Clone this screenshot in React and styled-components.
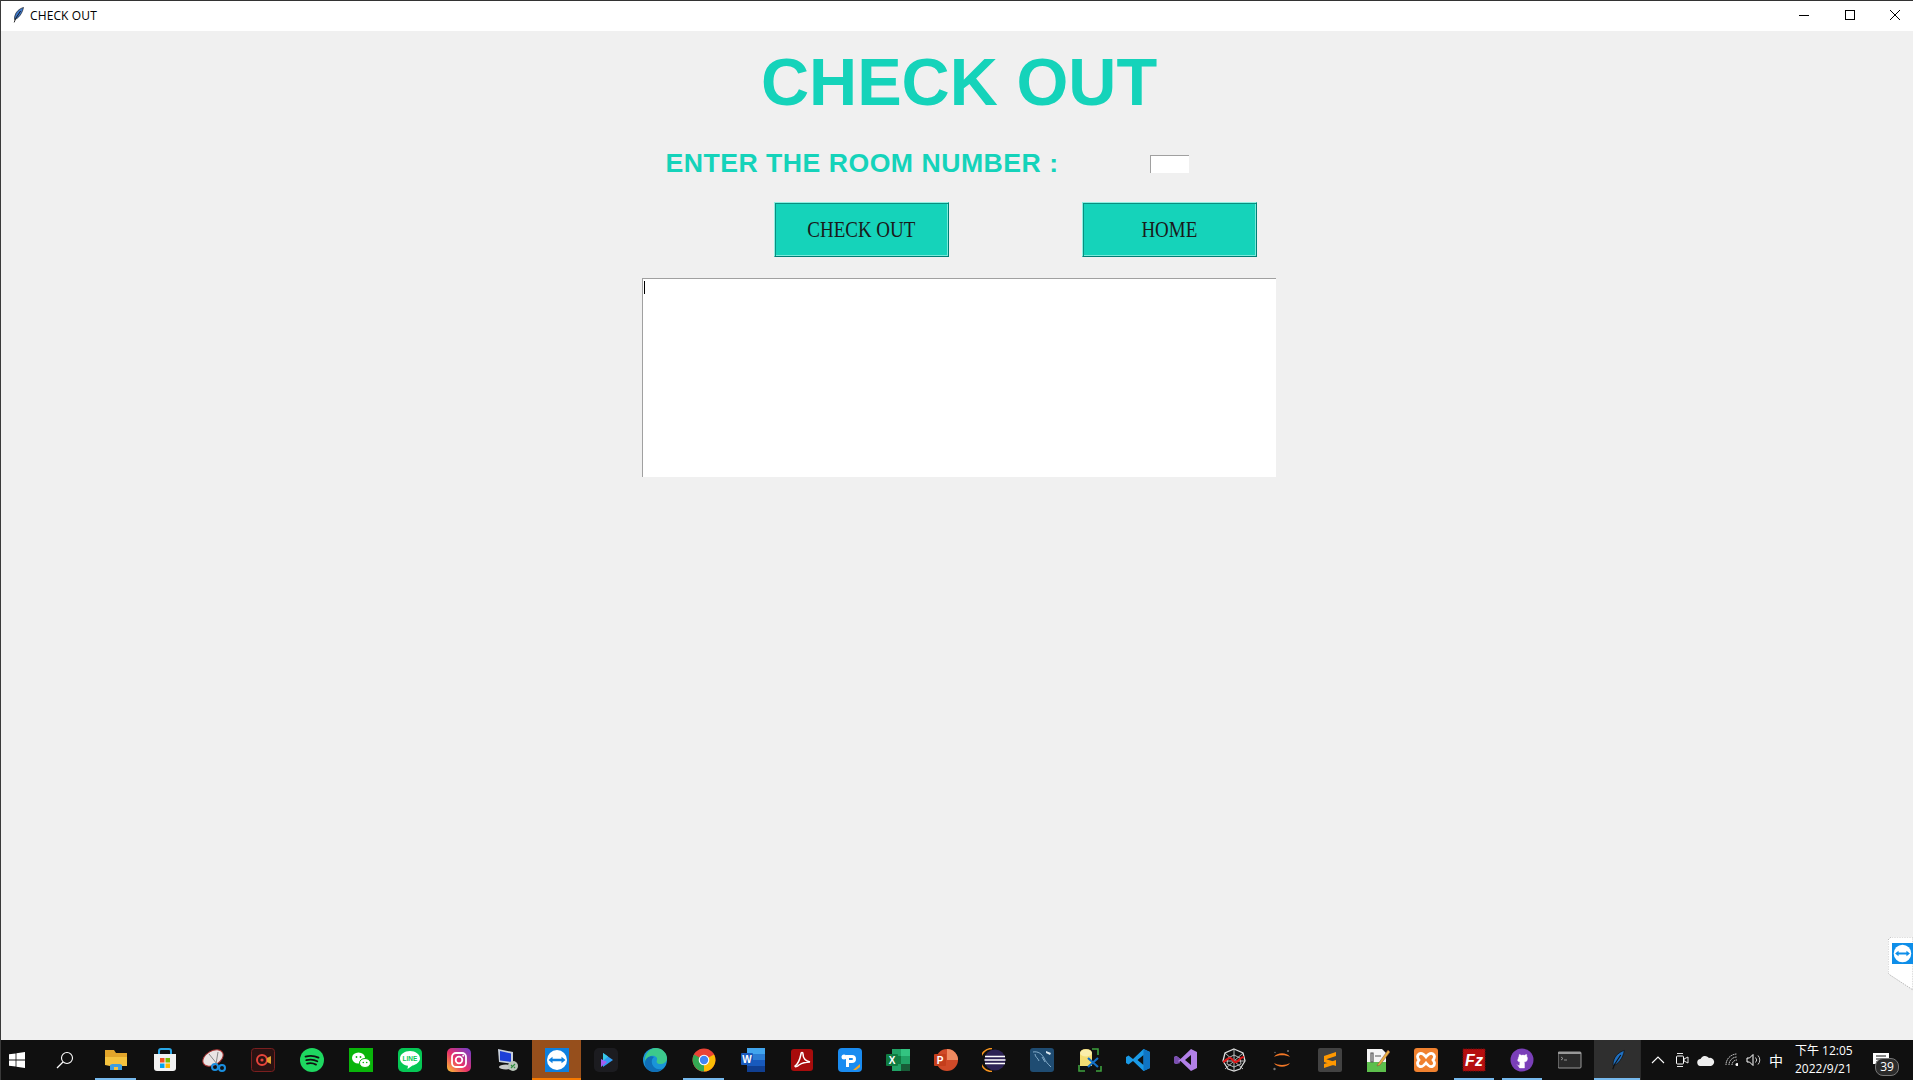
import React from "react";
import styled, { createGlobalStyle } from "styled-components";

const Global = createGlobalStyle`
  html, body { margin: 0; padding: 0; height: 100%; overflow: hidden; background: #f0f0f0; }
  #root { height: 100%; }
`;
const TEAL = "#15d3ba";

const Screen = styled.div`
  width: 1913px; height: 1080px; display: flex; flex-direction: column; position: relative;
  background: #f0f0f0; border-left: 1px solid #3a3a3a; box-sizing: border-box; overflow: hidden;
`;
const TitleBar = styled.header`
  height: 31px; flex: none; display: flex; align-items: center; background: #fff; margin-right: -5px;
  border-top: 1px solid #333; box-sizing: border-box; padding: 0 0 2px 11px;
`;
const TitleText = styled.span`
  font: 12px "Open Sans", "Noto Sans", sans-serif; color: #000; margin-left: 6px; flex: 1; letter-spacing: 0.12px;
`;
const WinBtn = styled.div`
  width: 45.5px; height: 28px; display: flex; align-items: center; justify-content: center;
`;
const Content = styled.main`
  flex: 1; min-height: 0; padding: 7px 0 0 641px;
`;
const Form = styled.div`
  display: grid; grid-template-columns: 440px 174px 20px; justify-items: center; align-items: center;
`;
const Heading = styled.h1`
  grid-column: 1 / -1; margin: 0; height: 87px; font: bold 66.67px/88px "Liberation Sans", Arial, sans-serif;
  color: ${TEAL}; white-space: nowrap;
`;
const Label = styled.label`
  font: bold 26.67px/30px "Liberation Sans", Arial, sans-serif; color: ${TEAL}; white-space: nowrap;
  margin-top: 23px; letter-spacing: 0.48px;
`;
const RoomInput = styled.input`
  width: 39px; height: 18px; box-sizing: border-box; margin: 25px 0 0; padding: 0; background: #fff; outline: none;
  border: 0; border-top: 1px solid #a0a0a0; border-left: 1px solid #a0a0a0;
`;
const ActionButton = styled.button`
  width: 175px; height: 55px; box-sizing: border-box; margin: 24px ${p => (p.$nudge ? 2 : 0)}px 0 0; padding: 0; background: ${TEAL}; color: #000;
  border: 1px solid; border-color: #8ef0e2 #007f75 #007f75 #8ef0e2;
  box-shadow: inset 1px 1px 0 #0a8f80, inset -1px -1px 0 #7aeadb;
  display: flex; align-items: center; justify-content: center; overflow: hidden;
`;
const ButtonText = styled.span`
  font: 24px/1 "Liberation Serif", "Times New Roman", serif; display: inline-block; white-space: nowrap;
  transform: scaleX(0.79); color: #1a1a1a; position: relative; top: -1px;
`;
const Output = styled.div`
  grid-column: 1 / -1; justify-self: stretch; height: 199px; margin-top: 21px; background: #fff; box-sizing: border-box;
  border-top: 1px solid #a0a0a0; border-left: 1px solid #a0a0a0; padding: 2px 0 0 1px;
`;
const Caret = styled.div`
  width: 1px; height: 13px; background: #000;
`;
const Taskbar = styled.footer`
  height: 40px; flex: none; margin-left: -1px; display: flex; align-items: center; background: #101010; position: relative;
`;
const Fixed = styled.div`
  width: ${p => p.$w}px; padding-left: ${p => p.$pl || 0}px; box-sizing: border-box; height: 40px; flex: none; display: flex; align-items: center;
  justify-content: ${p => (p.$pl ? "flex-start" : "center")};
`;
const Task = styled.div`
  width: ${p => p.$w}px; height: 40px; flex: none; display: flex; align-items: center; justify-content: center; position: relative;
  background: ${p => p.$flash ? "#964f1c" : p.$active ? "#2f2f2f" : "transparent"};
  &::after {
    content: ""; display: ${p => p.$run || p.$flash ? "block" : "none"}; position: absolute; bottom: 0; height: 2px;
    left: ${p => p.$flash || p.$active ? 0 : 4}px; right: ${p => p.$flash || p.$active ? 0 : 4}px;
    background: ${p => p.$flash ? "#f77a00" : "#76b9ed"};
  }
`;
const Tray = styled.div`
  flex: 1; display: flex; align-items: center; height: 40px; position: relative; padding-left: 5px;
  border-left: 1px solid #2a2a2a;
`;
const TrayIcon = styled.div`
  width: 24px; height: 40px; flex: none; display: flex; align-items: center; justify-content: center;
`;
const Lang = styled.div`
  width: 20px; flex: none; text-align: center; color: #fff; font: 14px "Noto Sans CJK TC", sans-serif;
`;
const Clock = styled.div`
  width: 64px; margin-left: 9px; flex: none; color: #fff; font: 12px/18px "Open Sans", "Noto Sans CJK TC", sans-serif; text-align: left;
`;
const Notify = styled.div`
  width: 40px; margin-left: 2px; height: 40px; position: relative; display: flex; align-items: center; justify-content: center;
`;
const Badge = styled.span`
  position: absolute; left: 14px; top: 18px; width: 22px; height: 16px; border-radius: 8px; background: #2b2b2b; border: 1px solid #777;
  color: #fff; font: 12px/16px "Open Sans", sans-serif; text-align: center;
`;
const SideTab = styled.div`
  position: absolute; right: 0; top: 937px; width: 25px; height: 54px;
`;

const S = ({ children, s = 24, vb = "0 0 24 24" }) => <svg width={s} height={s} viewBox={vb}>{children}</svg>;

const Feather = ({ s = 12, h = 16, c = "#3f78c8" }) => (
  <svg width={s} height={h} viewBox="0 0 12 16">
    <path d="M11.500.4C7.600 1.400 3.800 4.600 2.800 9c-.4 1.600-.4 2.800-.2 3.600C6.400 11.400 10.400 6.600 11.500.4z" fill={c} stroke="#111" strokeWidth=".6" />
    <path d="M8.600 4 3.600 11.600 2.200 15.400" stroke="#111" strokeWidth=".9" fill="none" />
  </svg>
);
const TV = ({ s = 24 }) => (
  <S s={s}>
    <rect width="24" height="24" fill="#0e80df" />
    <circle cx="12" cy="12" r="10" fill="#fff" />
    <path d="M3.500 12 7.500 8.800v2h9v-2l4 3.200-4 3.200v-2h-9v2z" fill="#0e80df" />
  </S>
);

const icons = [
  <S key="a"><path d="M1 8h22v10H6l-5-1z" fill="#f5c33f" /><path d="M1 2h9l2 3h11v4H1z" fill="#e2a52b" /><path d="M8 16h8l2 1v5H6v-5z" fill="#3c9ee0" /><path d="M10 19h4v3h-4z" fill="#f5c33f" /></S>,
  <S key="b"><path d="M1 6h22v14q0 3-3 3H4q-3 0-3-3z" fill="#f2f2f2" /><path d="M6 6V3q0-2 2-2h8q2 0 2 2v3" stroke="#29a8e8" strokeWidth="2" fill="none" /><rect x="7" y="10" width="4.500" height="4.500" fill="#f25022" /><rect x="12.500" y="10" width="4.500" height="4.500" fill="#7fba00" /><rect x="7" y="15.500" width="4.500" height="4.500" fill="#00a4ef" /><rect x="12.500" y="15.500" width="4.500" height="4.500" fill="#ffb900" /></S>,
  <S key="c"><ellipse cx="11" cy="10" rx="11" ry="7" transform="rotate(-30 11 10)" fill="#e9e4e4" stroke="#a33" strokeWidth="1" /><path d="M7 6l8 10M16 4l-2 12" stroke="#888" strokeWidth="1" /><circle cx="13" cy="19" r="3" fill="none" stroke="#1a8fe0" strokeWidth="2" /><circle cx="20" cy="20" r="3" fill="none" stroke="#1a8fe0" strokeWidth="2" /></S>,
  <S key="d"><rect x=".5" y=".5" width="23" height="23" rx="3" fill="#2a1212" stroke="#7a1f1f" /><circle cx="11" cy="12" r="5" fill="none" stroke="#e8453c" strokeWidth="2" /><circle cx="11" cy="12" r="1.600" fill="#e8453c" /><path d="M16 10l4-2v8l-4-2z" fill="#e0a030" /></S>,
  <S key="e"><circle cx="12" cy="12" r="12" fill="#1ed760" /><path d="M5.500 8.600c4.500-1.200 9-.9 13 1M6.300 12.200c3.800-1 7.700-.7 11 1.100M7 15.600c3.200-.8 6.300-.5 9 1" stroke="#101010" strokeWidth="1.800" strokeLinecap="round" fill="none" /></S>,
  <S key="f"><rect width="24" height="24" fill="#09b50a" /><ellipse cx="9.500" cy="10" rx="6.500" ry="5.500" fill="#fff" /><ellipse cx="16" cy="15" rx="5.500" ry="4.500" fill="#fff" stroke="#09b50a" /><circle cx="7.500" cy="9" r=".9" fill="#09b50a" /><circle cx="11.500" cy="9" r=".9" fill="#09b50a" /><circle cx="14.300" cy="14.500" r=".8" fill="#09b50a" /><circle cx="17.700" cy="14.500" r=".8" fill="#09b50a" /></S>,
  <S key="g"><rect width="24" height="24" rx="5" fill="#06c755" /><path d="M12 3c-5.500 0-10 3.300-10 7.500 0 3.700 3.400 6.700 8 7.300l-.5 3.200 5-3.400c3.500-1 7.500-3.400 7.500-7.100C22 6.300 17.500 3 12 3z" fill="#fff" /><text x="12" y="13" textAnchor="middle" fill="#06c755" fontFamily="Liberation Sans" fontWeight="bold" fontSize="6.500">LINE</text></S>,
  <S key="h"><defs><linearGradient id="ig" x1="0" y1="1" x2="1" y2="0"><stop offset="0" stopColor="#fdc830" /><stop offset=".45" stopColor="#e8306a" /><stop offset="1" stopColor="#6a40d0" /></linearGradient></defs><rect width="24" height="24" rx="5" fill="url(#ig)" /><rect x="5" y="5" width="14" height="14" rx="4" fill="none" stroke="#fff" strokeWidth="1.800" /><circle cx="12" cy="12" r="3.300" fill="none" stroke="#fff" strokeWidth="1.800" /><circle cx="16.200" cy="7.800" r="1" fill="#fff" /></S>,
  <S key="i"><path d="M2 1l15 3v12L3 14z" fill="#c8d0dc" /><path d="M4 3l11 2.500V14L4 12.500z" fill="#1d3fd8" /><ellipse cx="10" cy="19" rx="7" ry="2.500" fill="#c9c9c9" /><circle cx="17" cy="18" r="5" fill="#b9c4b9" /><path d="M15 20l4-4M15 17l1 1M18 19l1 1" stroke="#2f8f3f" strokeWidth="1.200" /></S>,
  <TV key="j" />,
  <S key="k"><rect width="24" height="24" rx="5" fill="#1c1c20" /><path d="M9 5l10 7-10 7z" fill="#2f9cf4" /><path d="M7 11l6 3-6 5z" fill="#a45cf2" /><path d="M9 5l5 3.500L9 13z" fill="#38c8e8" /></S>,
  <S key="l"><circle cx="12" cy="12" r="12" fill="#1a94d8" /><path d="M2 14C1 7 6 0 13 0c6 0 11 5 11 10 0 4-3 6-7 6-3 0-4-2-3-4 1-3-3-5-6-4-3 1-5 3-6 6z" fill="#3cc98c" /><path d="M2 14C3 9 8 7 11 9 8 11 8 16 11 19c3 3 8 3 10 0-3 4-7 5-9 5C6 24 1 20 2 14z" fill="#0f6fb8" /></S>,
  <S key="m"><circle cx="12" cy="12" r="11.500" fill="#ea4335" /><path d="M12 12 22 6.500A11.500 11.500 0 0 1 12 23.500z" fill="#fbbc05" /><path d="M12 12 12 23.500A11.500 11.500 0 0 1 2 6.500z" fill="#34a853" /><circle cx="12" cy="12" r="5.300" fill="#fff" /><circle cx="12" cy="12" r="4.200" fill="#4285f4" /></S>,
  <S key="n"><rect x="6" y="0" width="18" height="24" fill="#2b7cd3" /><rect x="6" y="0" width="18" height="6" fill="#41a5ee" /><rect x="6" y="12" width="18" height="6" fill="#185abd" /><rect x="6" y="18" width="18" height="6" fill="#103f91" /><rect y="5" width="12" height="12" rx="1" fill="#185abd" /><text x="6" y="15" textAnchor="middle" fill="#fff" fontFamily="Liberation Sans" fontWeight="bold" fontSize="10">W</text></S>,
  <S key="o"><rect x="1" y="1" width="22" height="22" rx="3" fill="#a80c0c" /><path d="M5 18c3-2 5-7 6-12 0-2 2-2 2 0 0 4 3 7 7 8-3 0-8 1-11 3-2 2-4 2-4 1z" fill="none" stroke="#fff" strokeWidth="1.500" /></S>,
  <S key="p"><rect width="24" height="24" rx="4" fill="#1a8cf0" /><path d="M8 7h6a4 4 0 0 1 0 8h-3v4H8zM11 10v2h3a1 1 0 0 0 0-2z" fill="#fff" /><circle cx="6" cy="9" r="2.500" fill="#fff" /><path d="M15 22l7-6v3l-4 3z" fill="#f5a623" /></S>,
  <S key="q"><rect x="6" y="1" width="18" height="22" fill="#21a366" /><rect x="15" y="1" width="9" height="7" fill="#33c481" /><rect x="6" y="8" width="9" height="8" fill="#107c41" /><rect x="15" y="16" width="9" height="7" fill="#185c37" /><rect y="6" width="12" height="12" rx="1" fill="#107c41" /><text x="6" y="16" textAnchor="middle" fill="#fff" fontFamily="Liberation Sans" fontWeight="bold" fontSize="10">X</text></S>,
  <S key="r"><circle cx="13" cy="12" r="11" fill="#d04a28" /><path d="M13 1a11 11 0 0 1 11 11H13z" fill="#f08a60" /><rect y="6" width="12" height="12" rx="1" fill="#c43e1c" /><text x="6" y="16" textAnchor="middle" fill="#fff" fontFamily="Liberation Sans" fontWeight="bold" fontSize="10">P</text></S>,
  <S key="s"><path d="M10 .5a11.500 11.500 0 0 0 0 23" fill="none" stroke="#f7941e" strokeWidth="1.500" /><circle cx="13" cy="12" r="10.500" fill="#2c2255" /><path d="M3 8.500h20M2.500 12h21M3 15.500h20" stroke="#fff" strokeWidth="1.300" /></S>,
  <S key="t"><rect width="24" height="24" rx="3" fill="#1f4c72" /><path d="M3 4c5-1 9 2 11 6 1 3 4 6 7 9M5 6c0 3 3 4 4 7M12 9l3 5" stroke="#9cc3de" strokeWidth=".8" fill="none" /><path d="M16 3l5 2-1 2-4-2z" fill="#dce8f0" /></S>,
  <S key="u"><path d="M2 6q0-5 6-5t6 5v12H2z" fill="#f5dd72" /><ellipse cx="8" cy="5" rx="6" ry="3.500" fill="#fbeeaa" /><path d="M14 1h6v6M1 17v6h6M23 18v5h-5" stroke="#3ea13e" strokeWidth="1.600" fill="none" /><path d="M10 19l10-9M20 19L10 10" stroke="#1470c8" strokeWidth="2.200" /></S>,
  <S key="v"><path d="M17.500 1 24 4v16l-6.500 3L7 13l-4.500 3.500L0 15v-6l2.500-1.500L7 11z" fill="#1a9ae6" /><path d="M17.500 7 11.500 12l6 5z" fill="#101010" /><path d="M17.500 1 24 4v16l-6.500 3z" fill="#0f75c4" /></S>,
  <S key="w"><path d="M17 1l6 3v16l-6 3L6.500 13l-4 3L0 15V9l2.500-1 4 3z" fill="#b280e8" /><path d="M17 7l-6 5 6 5z" fill="#101010" /><path d="M0 9l2.500-1 4 3-2.500 2 2.500 2-4 1L0 15z" fill="#7a4fb0" /></S>,
  <S key="x"><path d="M12 1 21 5l2 8-5 8-6 2-6-2-5-8 2-8z" fill="none" stroke="#ddd" strokeWidth="1.300" /><path d="M12 1v22M1 13h22M3 5l18 16M21 5 3 21M12 7l6 3 1 6-7 3-7-3 1-6z" stroke="#ccc" strokeWidth=".9" fill="none" /><path d="M1 14c3-1 4-4 7-4s3 5 6 4 4-5 8-5" stroke="#e01818" strokeWidth="2.200" fill="none" /></S>,
  <S key="y"><path d="M4 9c3-5 13-5 16 0-4-2.500-12-2.500-16 0zM4 15c3 5 13 5 16 0-4 2.500-12 2.500-16 0z" fill="#f37726" /><circle cx="18" cy="3" r="1" fill="#777" /><circle cx="4.500" cy="21" r="1.200" fill="#777" /><circle cx="5" cy="4.500" r=".7" fill="#777" /></S>,
  <S key="z"><rect width="24" height="24" rx="2" fill="#424242" /><path d="M6 8 18 4v4L6 12zM6 10.500l12 3.800v-.1L18 18 6 14zM6 16l12-4v4L6 20z" fill="#ff9800" /></S>,
  <S key="aa"><path d="M1 1h15l4 4v19H1z" fill="#f5f5f5" /><path d="M1 14h19v10H1z" fill="#5cbf4c" /><path d="M5 5h2v9H5zM9 8h6" stroke="#555" strokeWidth="1.200" fill="none" /><path d="M12 16 22 2l2 2-10 13-3 1z" fill="#e8b040" stroke="#844" strokeWidth=".5" /></S>,
  <S key="ab"><rect width="24" height="24" rx="3" fill="#f0812f" /><path d="M5 6q3-2 7 3 4-5 7-3t0 6q3 4 0 6t-7-3q-4 5-7 3t0-6q-3-4 0-6z" fill="none" stroke="#fff" strokeWidth="2.800" /></S>,
  <S key="ac"><rect x="1" y="1" width="22" height="22" fill="#b50f0f" strokeDasharray="1.500 1" stroke="#7a0a0a" /><text x="12" y="18" textAnchor="middle" fill="#fff" fontFamily="Liberation Sans" fontStyle="italic" fontWeight="bold" fontSize="16">Fz</text></S>,
  <S key="ad"><circle cx="12" cy="12" r="11.500" fill="#7a3fb8" /><path d="M9.500 20v-2.500c-2 .4-2.500-1-2.500-1M14.500 20v-4c0-1 0-1.500-.5-2 2 0 3.500-1 3.500-3.500 0-1-.3-1.700-.8-2.300.2-.7 0-1.700 0-1.700s-1 0-2 .8a7 7 0 0 0-3.500 0c-1-.8-2-.8-2-.8s-.2 1-.1 1.700c-.5.600-.8 1.300-.8 2.300C6.800 13 8.200 14 10.200 14c-.4.400-.5 1-.5 1.500V20h4.800z" fill="#fff" stroke="#fff" strokeWidth=".4" /></S>,
  <S key="ae"><rect x="0" y="4" width="23" height="16" rx="1" fill="#2a2a2a" stroke="#999" /><path d="M0 4h23v2H0z" fill="#999" /><path d="M3 9l2 1.500L3 12M6 12h3" stroke="#aaa" strokeWidth=".8" fill="none" /></S>,
];

const tasks = icons.map((icon, i) => {
  const w = i < 15 ? 49 : 48;
  return { icon, w, run: [0, 12, 28, 29].includes(i), flash: i === 9 };
});

export default function App() {
  return (
    <Screen>
      <Global />
      <TitleBar>
        <Feather />
        <TitleText>CHECK OUT</TitleText>
        <WinBtn><svg width="10" height="10"><path d="M0 5.500h10" stroke="#000" /></svg></WinBtn>
        <WinBtn><svg width="10" height="10"><rect x=".5" y=".5" width="9" height="9" fill="none" stroke="#000" /></svg></WinBtn>
        <WinBtn><svg width="10" height="10"><path d="M0 0l10 10M10 0 0 10" stroke="#000" /></svg></WinBtn>
      </TitleBar>
      <Content>
        <Form>
          <Heading>CHECK OUT</Heading>
          <Label>ENTER THE ROOM NUMBER :</Label>
          <RoomInput />
          <span />
          <ActionButton $nudge><ButtonText>CHECK OUT</ButtonText></ActionButton>
          <ActionButton><ButtonText>HOME</ButtonText></ActionButton>
          <span />
          <Output><Caret /></Output>
        </Form>
      </Content>
      <Taskbar>
        <Fixed $w={40} $pl={9}><svg width="16" height="16" viewBox="0 0 16 16"><path d="M0 2.300 6.600 1.400V7.600H0zM7.400 1.300 16 0V7.600H7.400zM0 8.400H6.600V14.600L0 13.700zM7.400 8.400H16V16L7.400 14.700z" fill="#fff" /></svg></Fixed>
        <Fixed $w={50}><svg width="18" height="18" viewBox="0 0 18 18"><circle cx="11" cy="7" r="5.500" fill="none" stroke="#fff" strokeWidth="1.100" /><path d="M7 11 1 17" stroke="#fff" strokeWidth="1.300" /></svg></Fixed>
        <Fixed $w={1} />
        {tasks.map((t, i) => <Task key={i} $w={t.w} $run={t.run} $flash={t.flash}>{t.icon}</Task>)}
        <Task $w={46} $active $run><Feather s={15} h={24} c="#1f6fc0" /></Task>
        <Tray>
          <TrayIcon><svg width="14" height="8"><path d="M1 7l6-6 6 6" fill="none" stroke="#fff" strokeWidth="1.100" /></svg></TrayIcon>
          <TrayIcon><svg width="14" height="16" viewBox="0 0 14 16"><rect x="1.500" y="4" width="7" height="8" rx="1" fill="none" stroke="#fff" /><path d="M9 7l4-2v6L9 9zM2 1.500h6M2 14.500h6" fill="none" stroke="#fff" strokeWidth=".9" /></svg></TrayIcon>
          <TrayIcon><svg width="18" height="11" viewBox="0 0 18 11"><path d="M4 11a3.500 3.500 0 0 1-.5-7A5 5 0 0 1 12 3a4 4 0 0 1 2 8z" fill="#eee" /></svg></TrayIcon>
          <TrayIcon><svg width="16" height="14" viewBox="-3 0 16 14"><path d="M1 12a11 11 0 0 1 11-11M4 12a8 8 0 0 1 8-8M7 12a5 5 0 0 1 5-5" fill="none" stroke="#ddd" strokeDasharray="1.500 .6" /><circle cx="12" cy="11.500" r="1.500" fill="#fff" /></svg></TrayIcon>
          <TrayIcon><svg width="16" height="14" viewBox="0 0 16 14"><path d="M1 5h2.500L7 1.500v11L3.500 9H1z" fill="none" stroke="#fff" /><path d="M9.500 4.500a3.500 3.500 0 0 1 0 5M12 2.500a6.500 6.500 0 0 1 0 9" fill="none" stroke="#ccc" /></svg></TrayIcon>
          <Lang>中</Lang>
          <Clock>下午 12:05<br />2022/9/21</Clock>
          <Notify>
            <svg width="16" height="14" viewBox="0 0 16 14"><path d="M0 0h16v11H0z" fill="#fff" /><path d="M3 3h10M3 6h10M3 9h6" stroke="#101010" /></svg>
            <Badge>39</Badge>
          </Notify>
        </Tray>
      </Taskbar>
      <SideTab>
        <svg width="25" height="54" viewBox="0 0 25 54">
          <path d="M0 3 3 0H25V53L2 38 0 36z" fill="#fff" stroke="#bbb" strokeDasharray="1.500 1" />
          <g transform="translate(4 6) scale(.875)">
            <rect width="24" height="24" fill="#0e8ee9" />
            <circle cx="12" cy="12" r="10" fill="#fff" />
            <path d="M3.500 12 7.500 8.800v2h9v-2l4 3.200-4 3.200v-2h-9v2z" fill="#0e8ee9" />
          </g>
        </svg>
      </SideTab>
    </Screen>
  );
}
